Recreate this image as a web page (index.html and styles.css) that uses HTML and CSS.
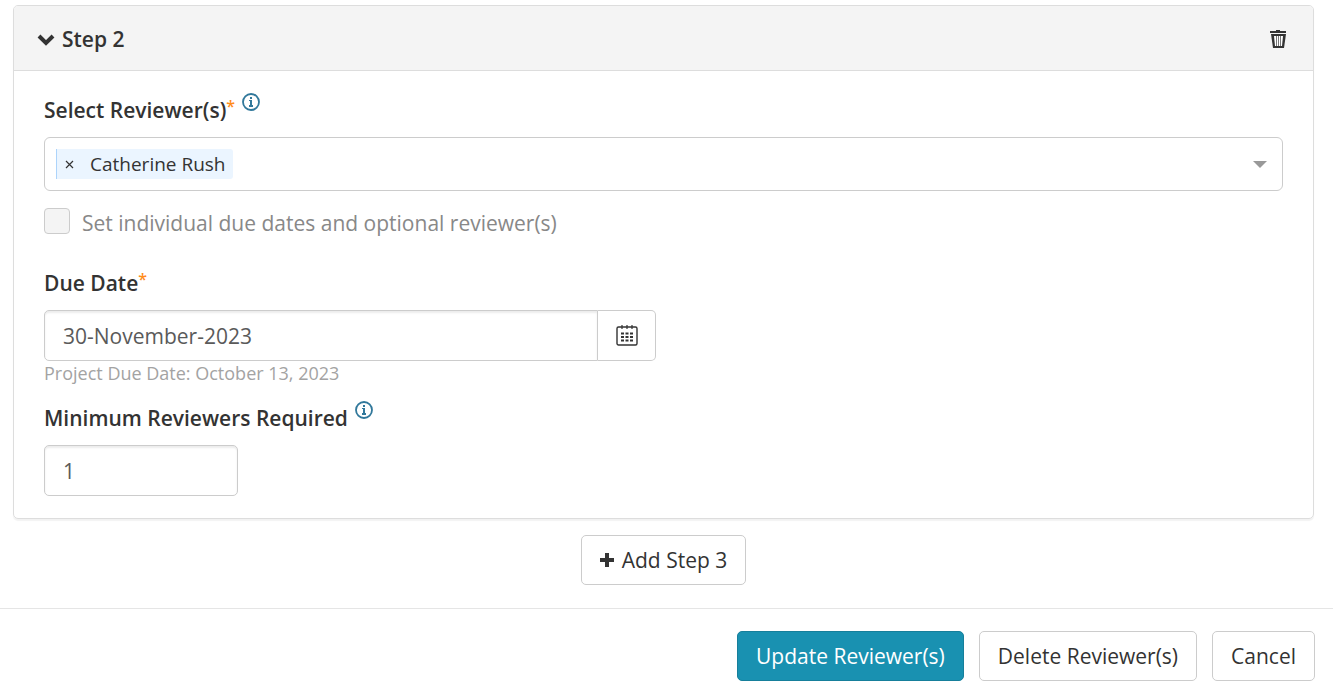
FILE: index.html
```html
<!DOCTYPE html>
<html lang="en">
<head>
  <meta charset="UTF-8">
  <meta name="viewport" content="width=device-width, initial-scale=1.0">
  <title>Reviewers</title>
  <link rel="stylesheet" href="styles.css">
</head>
<body>
  <form class="review-form">
    <section class="panel">
      <header class="panel-header">
        <button type="button" class="panel-toggle" aria-expanded="true">
          <svg class="icon-chevron" viewBox="0 0 18 14" width="18" height="14"><path d="M2 4l7 7 7-7" fill="none" stroke="currentColor" stroke-width="4"/></svg>
          Step 2
        </button>
        <button type="button" class="icon-button" aria-label="Delete step">
          <svg viewBox="0 0 18 20" width="18" height="20">
            <path d="M7 2V1h4v1h6v2H1V2z" fill="currentColor"/>
            <path d="M2 5h15l-2 14H4z" fill="currentColor"/>
            <path d="M5 7h9l-1 10H6z" fill="#fff"/>
            <path d="M7.500 7v10M9.500 7v10M11.500 7v10" stroke="#777" stroke-width="1"/>
          </svg>
        </button>
      </header>

      <div class="panel-body">
        <div class="label-row">
          <label for="reviewers">Select Reviewer(s)<span class="required">*</span></label>
          <button type="button" class="info" aria-label="Help">
            <svg viewBox="0 0 18 18" width="18" height="18"><circle cx="9" cy="9" r="8" fill="none" stroke="currentColor" stroke-width="1.8"/><path d="M8 4h2v2H8zM7 7h3v5h1v2H7v-2h1V8H7z" fill="currentColor"/></svg>
          </button>
        </div>
        <div class="multi-select">
          <span class="chip">
            <button type="button" class="chip-remove" aria-label="Remove">
              <svg viewBox="0 0 9 9" width="9" height="9"><path d="M1 1l7 7M8 1l-7 7" stroke="currentColor" stroke-width="1.2"/></svg>
            </button>
            Catherine Rush
          </span>
          <input type="text" id="reviewers" class="multi-search">
          <button type="button" class="arrow" aria-label="Open">
            <svg viewBox="0 0 14 8" width="14" height="8"><path d="M0 1h14L7 8z" fill="currentColor"/></svg>
          </button>
        </div>

        <div class="check-row">
          <input type="checkbox" id="individual" disabled>
          <label for="individual">Set individual due dates and optional reviewer(s)</label>
        </div>

        <div class="label-row">
          <label for="due">Due Date<span class="required">*</span></label>
        </div>
        <div class="date-group">
          <input type="text" id="due" class="field" value="30-November-2023">
          <button type="button" class="date-button" aria-label="Pick a date">
            <svg viewBox="0 0 22 22" width="22" height="22">
              <rect x="1" y="2" width="20" height="18" rx="1.5" fill="none" stroke="currentColor" stroke-width="1.4"/>
              <path d="M6 0v4M11 0v4M16 0v4" stroke="currentColor" stroke-width="1.2"/>
              <path d="M5 8.500h12M5 12h12M5 15.500h12" stroke="currentColor" stroke-width="2" stroke-dasharray="3 1.500"/>
            </svg>
          </button>
        </div>
        <p class="help">Project Due Date: October 13, 2023</p>

        <div class="label-row">
          <label for="minimum">Minimum Reviewers Required</label>
          <button type="button" class="info" aria-label="Help">
            <svg viewBox="0 0 18 18" width="18" height="18"><circle cx="9" cy="9" r="8" fill="none" stroke="currentColor" stroke-width="1.8"/><path d="M8 4h2v2H8zM7 7h3v5h1v2H7v-2h1V8H7z" fill="currentColor"/></svg>
          </button>
        </div>
        <input type="text" id="minimum" class="field field-short" value="1">
      </div>
    </section>

    <div class="add-row">
      <button type="button" class="btn">
        <svg viewBox="0 0 14 14" width="14" height="14"><path d="M7 0v14M0 7h14" stroke="currentColor" stroke-width="4"/></svg>
        Add Step 3
      </button>
    </div>

    <footer class="actions">
      <button type="submit" class="btn btn-primary">Update Reviewer(s)</button>
      <button type="button" class="btn">Delete Reviewer(s)</button>
      <button type="button" class="btn">Cancel</button>
    </footer>
  </form>
</body>
</html>
```

FILE: styles.css
```css
* {
  box-sizing: border-box;
}

body {
  margin: 0;
  font-family: "Open Sans", sans-serif;
  font-size: 21px;
  line-height: 30px;
  color: #333;
  background-color: #fff;
}

button,
input {
  font: inherit;
  color: inherit;
}

button {
  padding: 0;
  border: none;
  background: none;
  cursor: pointer;
}

svg {
  display: block;
}

.panel {
  margin: 5px 19px 0 13px;
  border: 1px solid #ddd;
  border-radius: 5px;
  box-shadow: 0 2px 1px rgba(0, 0, 0, 0.05);
}

.panel-header {
  display: flex;
  justify-content: space-between;
  align-items: center;
  height: 65px;
  padding: 2px 26px 0 23px;
  border-bottom: 1px solid #ddd;
  border-radius: 4px 4px 0 0;
  background-color: #f4f4f4;
}

.panel-toggle {
  display: flex;
  align-items: center;
  gap: 7px;
  font-weight: 600;
}

.panel-body {
  padding: 24px 30px 22px;
}

.label-row {
  display: flex;
  gap: 7px;
  margin-bottom: 12px;
  font-weight: 600;
}

.required {
  color: #ff8c1a;
  font-size: 16px;
  line-height: 0;
  vertical-align: 6px;
}

.info {
  align-self: flex-start;
  margin-top: -2px;
  color: #31789b;
}

.multi-select {
  display: flex;
  align-items: center;
  height: 54px;
  padding: 0 15px 0 11px;
  border: 1px solid #ccc;
  border-radius: 6px;
}

.chip {
  display: flex;
  align-items: center;
  gap: 16px;
  padding: 0 7px 0 8px;
  border-left: 1px solid #add4fb;
  border-radius: 0 3px 3px 0;
  background-color: #ebf5ff;
  font-size: 19px;
}

.multi-search {
  flex: 1;
  min-width: 0;
  border: none;
  outline: none;
  background: none;
}

.arrow {
  color: #999;
}

.check-row {
  display: flex;
  align-items: flex-start;
  gap: 12px;
  margin: 17px 0 30px;
  color: #888;
}

.check-row input {
  appearance: none;
  width: 26px;
  height: 26px;
  margin: 0;
  border: 1px solid #ccc;
  border-radius: 4px;
  background-color: #f4f4f4;
}

.date-group {
  display: flex;
  width: 612px;
  max-width: 100%;
}

.field {
  flex: 1;
  min-width: 0;
  height: 51px;
  padding: 0 18px;
  border: 1px solid #ccc;
  border-radius: 5px;
  box-shadow: inset 0 2px 2px rgba(0, 0, 0, 0.08);
  color: #5a5a5a;
}

.date-group .field {
  border-radius: 5px 0 0 5px;
}

.field-short {
  display: block;
  width: 194px;
}

.date-button {
  display: flex;
  justify-content: center;
  align-items: center;
  width: 58px;
  border: 1px solid #ccc;
  border-left: none;
  border-radius: 0 5px 5px 0;
}

.help {
  margin: 0 0 18px;
  color: #a3a3a3;
  font-size: 18px;
  line-height: 24px;
}

.add-row {
  display: flex;
  justify-content: center;
  padding: 16px 6px 23px 0;
}

.btn {
  display: flex;
  align-items: center;
  gap: 8px;
  height: 50px;
  padding: 0 18px;
  border: 1px solid #ccc;
  border-radius: 5px;
  background-color: #fff;
}

.btn-primary {
  border-color: #167f9b;
  background-color: #1991b1;
  color: #fff;
}

.actions {
  display: flex;
  justify-content: flex-end;
  gap: 15px;
  padding: 22px 18px;
  border-top: 1px solid #e5e5e5;
}
```
